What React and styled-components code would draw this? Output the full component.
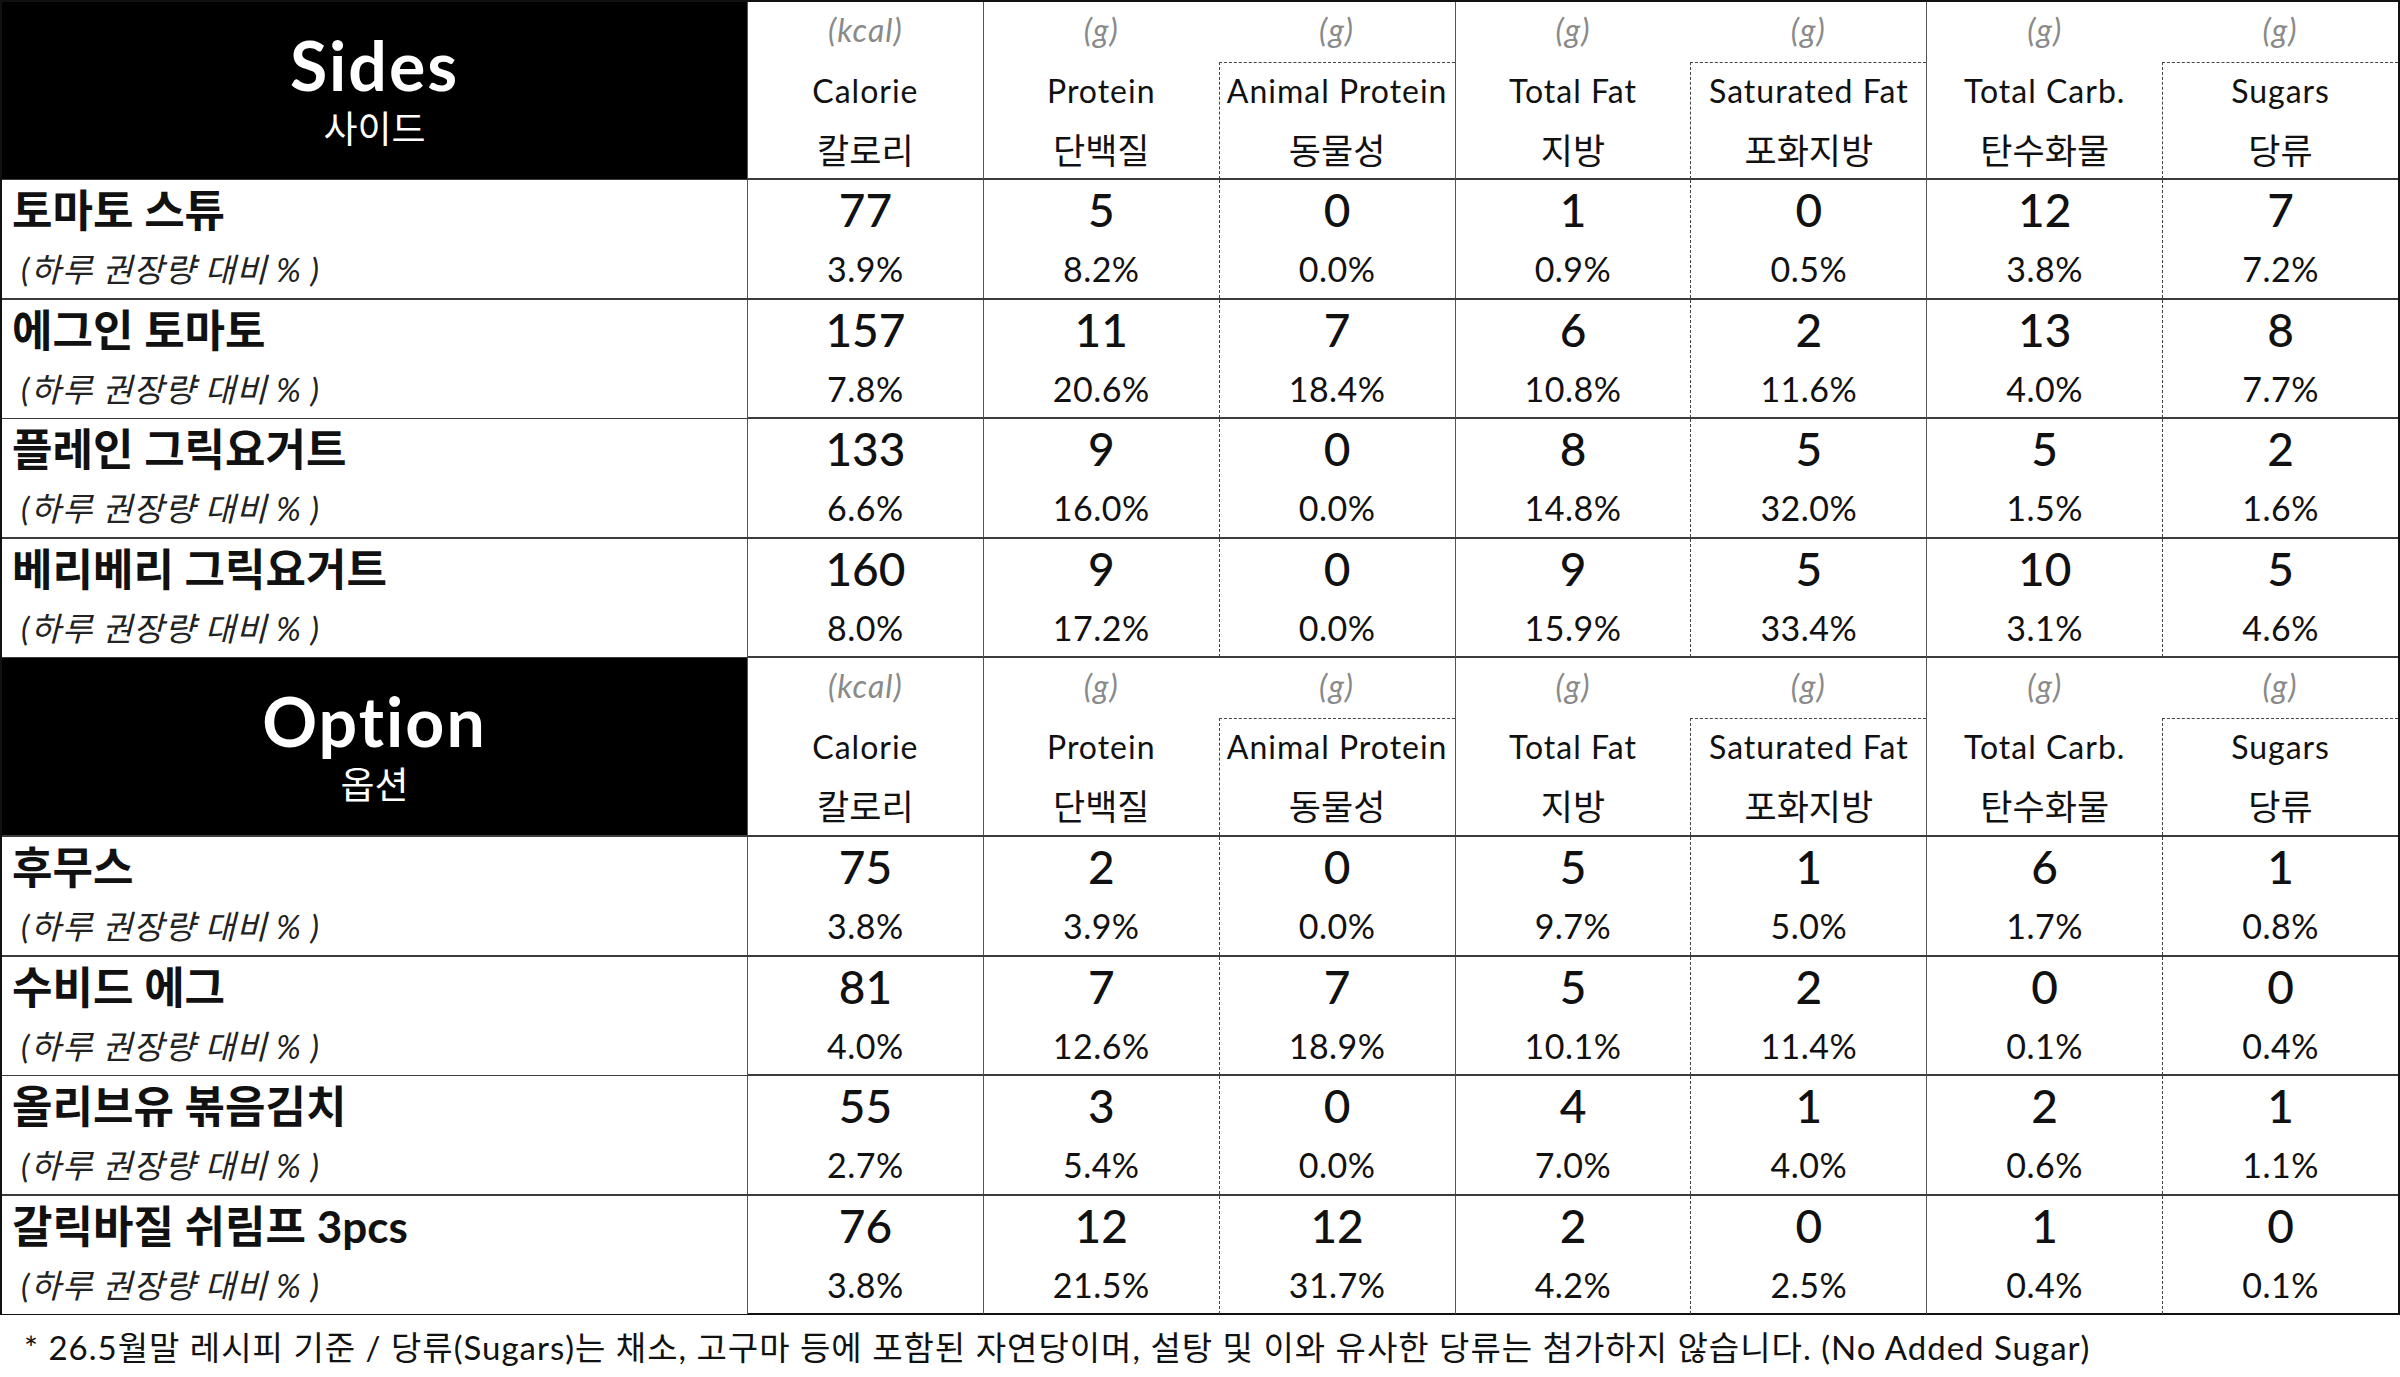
import React from 'react';
import styled, { createGlobalStyle } from 'styled-components';

const GlobalStyle = createGlobalStyle`
  html, body {
    margin: 0;
    padding: 0;
    background: #fff;
  }
  body {
    font-family: Lato, "Noto Sans CJK KR", sans-serif;
    color: #111;
  }
`;

const columns = [
  { unit: '(kcal)', en: 'Calorie', ko: '칼로리' },
  { unit: '(g)', en: 'Protein', ko: '단백질' },
  { unit: '(g)', en: 'Animal Protein', ko: '동물성', sub: true },
  { unit: '(g)', en: 'Total Fat', ko: '지방' },
  { unit: '(g)', en: 'Saturated Fat', ko: '포화지방', sub: true },
  { unit: '(g)', en: 'Total Carb.', ko: '탄수화물' },
  { unit: '(g)', en: 'Sugars', ko: '당류', sub: true },
];

const sections = [
  {
    title: 'Sides',
    ko: '사이드',
    height: 176,
    items: [
      { name: '토마토 스튜', values: [77, 5, 0, 1, 0, 12, 7], pct: ['3.9%', '8.2%', '0.0%', '0.9%', '0.5%', '3.8%', '7.2%'] },
      { name: '에그인 토마토', values: [157, 11, 7, 6, 2, 13, 8], pct: ['7.8%', '20.6%', '18.4%', '10.8%', '11.6%', '4.0%', '7.7%'] },
      { name: '플레인 그릭요거트', values: [133, 9, 0, 8, 5, 5, 2], pct: ['6.6%', '16.0%', '0.0%', '14.8%', '32.0%', '1.5%', '1.6%'] },
      { name: '베리베리 그릭요거트', values: [160, 9, 0, 9, 5, 10, 5], pct: ['8.0%', '17.2%', '0.0%', '15.9%', '33.4%', '3.1%', '4.6%'] },
    ],
  },
  {
    title: 'Option',
    ko: '옵션',
    height: 177,
    items: [
      { name: '후무스', values: [75, 2, 0, 5, 1, 6, 1], pct: ['3.8%', '3.9%', '0.0%', '9.7%', '5.0%', '1.7%', '0.8%'] },
      { name: '수비드 에그', values: [81, 7, 7, 5, 2, 0, 0], pct: ['4.0%', '12.6%', '18.9%', '10.1%', '11.4%', '0.1%', '0.4%'] },
      { name: '올리브유 볶음김치', values: [55, 3, 0, 4, 1, 2, 1], pct: ['2.7%', '5.4%', '0.0%', '7.0%', '4.0%', '0.6%', '1.1%'] },
      { name: '갈릭바질 쉬림프 3pcs', values: [76, 12, 12, 2, 0, 1, 0], pct: ['3.8%', '21.5%', '31.7%', '4.2%', '2.5%', '0.4%', '0.1%'] },
    ],
  },
];

const Page = styled.div`
  width: 2400px;
  height: 1377px;
  box-sizing: border-box;
  overflow: hidden;
`;

const Table = styled.div`
  border-top: 2px solid #111;
  border-left: 2px solid #111;
  border-right: 2px solid #111;
`;

const Row = styled.div`
  display: grid;
  grid-template-columns: 745px repeat(7, 1fr);
  height: ${p => p.$h}px;
  border-bottom: 2px solid ${p => (p.$last ? '#111' : '#3c3c3c')};
`;

const TitleCell = styled.div`
  background: #000;
  color: #fff;
  display: flex;
  flex-direction: column;
  align-items: center;
  padding-top: 23px;
`;

const Title = styled.div`
  font-size: 68px;
  font-weight: 700;
  line-height: 80px;
  letter-spacing: 2px;
`;

const TitleKo = styled.div`
  font-size: 37px;
  line-height: 48px;
  font-weight: 400;
`;

const HeadCell = styled.div`
  display: flex;
  flex-direction: column;
  border-left: ${p => (p.$sub ? 'none' : '1px solid #555')};
  text-align: center;
`;

const Unit = styled.div`
  height: 60px;
  line-height: 56px;
  font-size: 32px;
  font-style: italic;
  letter-spacing: 1px;
  color: #8a8a8a;
`;

const LabelBox = styled.div`
  flex: 1;
  border-top: 1px ${p => (p.$sub ? 'dashed #444' : 'solid transparent')};
  border-left: ${p => (p.$sub ? '1px dashed #444' : 'none')};
`;

const LabelEn = styled.div`
  height: 60px;
  line-height: 55px;
  font-size: 32px;
  letter-spacing: 1px;
  color: #111;
  white-space: nowrap;
`;

const LabelKo = styled.div`
  height: 56px;
  line-height: 54px;
  font-size: 35px;
  color: #111;
`;

const NameCell = styled.div`
  display: flex;
  flex-direction: column;
  background: #fff;
`;

const Name = styled.div`
  height: 62px;
  line-height: 60px;
  padding-left: 10px;
  font-size: 44px;
  font-weight: 700;
  white-space: nowrap;
`;

const Daily = styled.div`
  height: 56px;
  line-height: 54px;
  padding-left: 19px;
  font-size: 33px;
  font-style: italic;
  letter-spacing: 1px;
  color: #222;
  white-space: nowrap;
`;

const DataCell = styled.div`
  display: flex;
  flex-direction: column;
  align-items: center;
  border-left: 1px ${p => (p.$sub ? 'dashed #444' : 'solid #555')};
`;

const Value = styled.div`
  height: 62px;
  line-height: 60px;
  font-size: 46px;
  font-weight: 500;
`;

const Percent = styled.div`
  height: 56px;
  line-height: 53px;
  font-size: 34px;
  font-weight: 400;
  letter-spacing: 0.5px;
`;

const Footer = styled.div`
  height: 62px;
  display: flex;
  align-items: center;
  padding-left: 24px;
  font-size: 33px;
  letter-spacing: 1px;
  color: #111;
  white-space: nowrap;
`;

const Section = ({ data, last }) => (
  <>
    <Row $h={data.height}>
      <TitleCell>
        <Title>{data.title}</Title>
        <TitleKo>{data.ko}</TitleKo>
      </TitleCell>
      {columns.map(col => (
        <HeadCell key={col.en} $sub={col.sub}>
          <Unit>{col.unit}</Unit>
          <LabelBox $sub={col.sub}>
            <LabelEn>{col.en}</LabelEn>
            <LabelKo>{col.ko}</LabelKo>
          </LabelBox>
        </HeadCell>
      ))}
    </Row>
    {data.items.map((item, idx) => (
      <Row key={item.name} $h={117.5} $last={last && idx === data.items.length - 1}>
        <NameCell>
          <Name>{item.name}</Name>
          <Daily>(하루 권장량 대비 % )</Daily>
        </NameCell>
        {item.values.map((v, i) => (
          <DataCell key={i} $sub={columns[i].sub}>
            <Value>{v}</Value>
            <Percent>{item.pct[i]}</Percent>
          </DataCell>
        ))}
      </Row>
    ))}
  </>
);

const App = () => (
  <Page>
    <GlobalStyle />
    <Table>
      {sections.map((s, i) => (
        <Section key={s.title} data={s} last={i === sections.length - 1} />
      ))}
    </Table>
    <Footer>
      * 26.5월말 레시피 기준 / 당류(Sugars)는 채소, 고구마 등에 포함된 자연당이며, 설탕 및 이와 유사한 당류는 첨가하지 않습니다. (No Added Sugar)
    </Footer>
  </Page>
);

export default App;
